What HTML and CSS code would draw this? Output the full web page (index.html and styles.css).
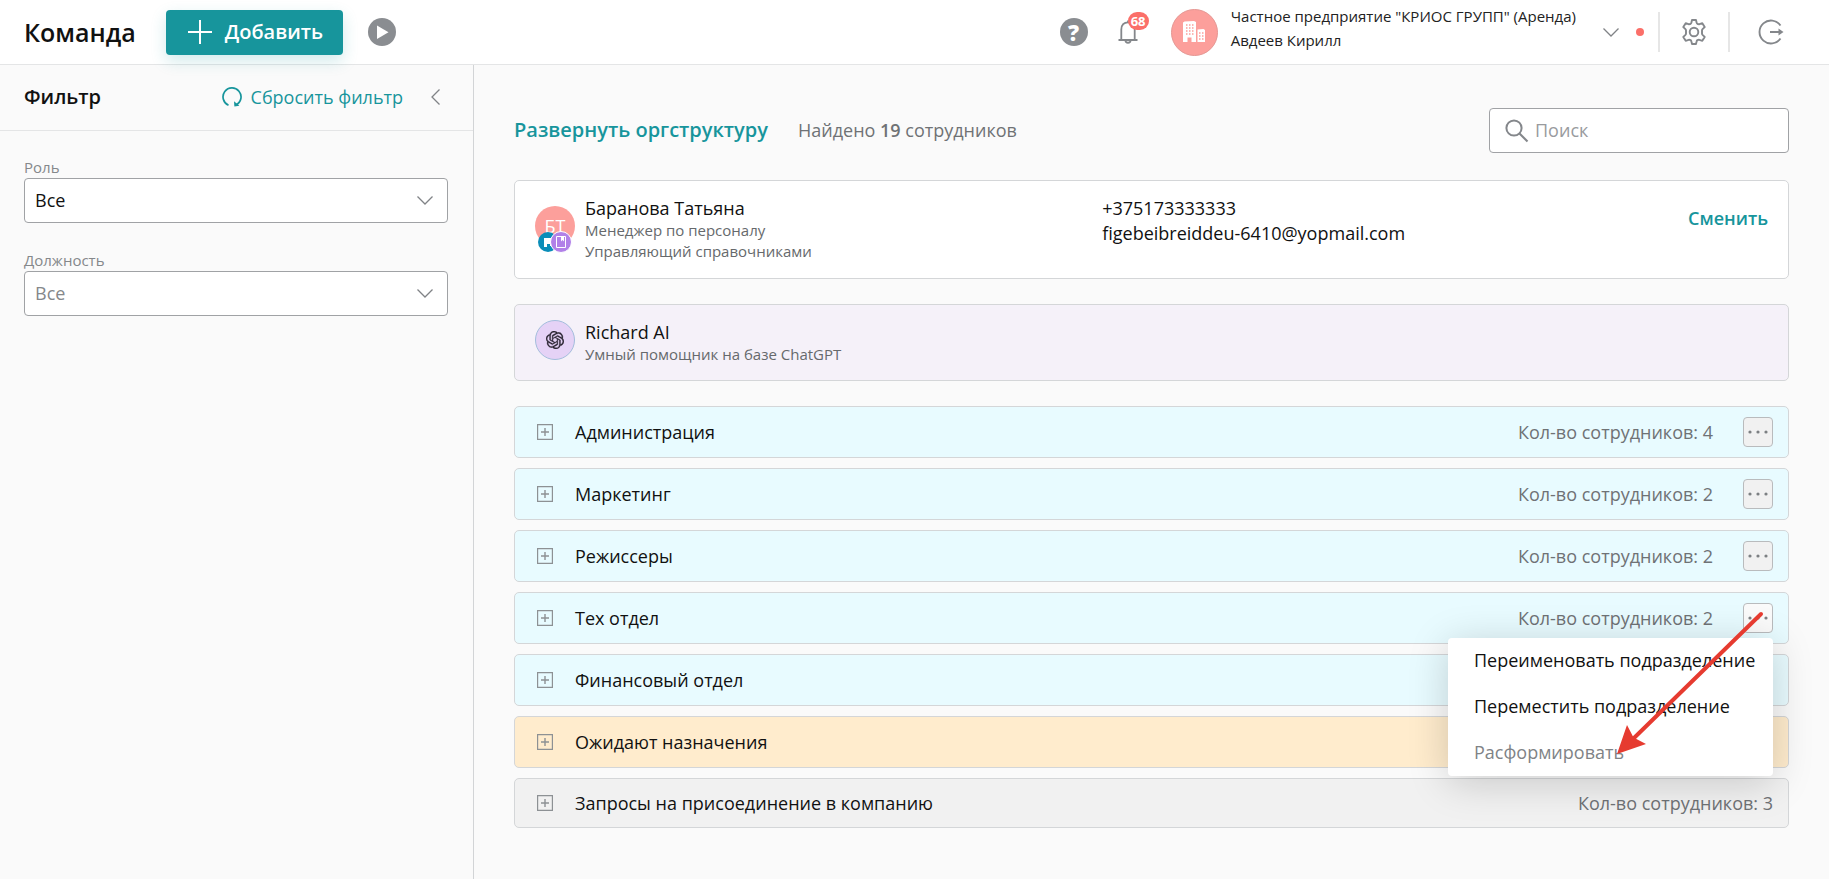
FILE: index.html
```html
<!DOCTYPE html>
<html lang="ru">
<head>
<meta charset="utf-8">
<title>Команда</title>
<link rel="stylesheet" href="styles.css">
</head>
<body>
<svg class="sprite" aria-hidden="true">
  <symbol id="chevron" viewBox="0 0 16 9"><path d="M.5 .5 8 8 15.500 .5" fill="none" stroke="currentColor" stroke-width="1.300"/></symbol>
  <symbol id="plus-box" viewBox="0 0 16 16"><path d="M.5 .5h15v15H.5zM8 4v8M4 8h8" fill="none" stroke="currentColor" stroke-width="1.400"/></symbol>
  <symbol id="dots" viewBox="0 0 20 4"><g fill="#7c7f82"><circle cx="2" cy="2" r="1.600"/><circle cx="10" cy="2" r="1.600"/><circle cx="18" cy="2" r="1.600"/></g></symbol>
</svg>

<header class="header">
  <h1 class="title">Команда</h1>
  <button class="add" type="button">
    <svg width="24" height="24" viewBox="0 0 24 24"><path d="M12 0v24M0 12h24" stroke="#fff" stroke-width="2"/></svg>
    <span>Добавить</span>
  </button>
  <button class="icon-button" type="button" aria-label="Видео">
    <svg width="28" height="28" viewBox="0 0 28 28"><circle cx="14" cy="14" r="14" fill="#8a8d91"/><path d="M9 7.500v13.500l11.500-6.700z" fill="#fff"/></svg>
  </button>

  <div class="header-right">
    <button class="icon-button help" type="button" aria-label="Помощь">?</button>
    <button class="icon-button bell" type="button" aria-label="Уведомления">
      <svg width="20" height="24" viewBox="0 0 20 24"><path d="M.5 20h19M3.300 20V9.500C3.300 5 6 2.300 10 2.300s6.700 2.700 6.700 7.200V20M10 2.300V.5M7.500 20.500c0 3 5 3 5 0" fill="none" stroke="#84878b" stroke-width="1.800"/></svg>
      <span class="badge">68</span>
    </button>
    <button class="account" type="button">
      <span class="company-logo">
        <svg width="24" height="24" viewBox="0 0 24 24"><path d="M1 2.500 2.500 1.500 12 1l2 1v20H9.500v-4.500h-4V22H1zM15.500 9.500l6-.5 1.500 1v12h-7.500z" fill="#fff"/><path d="M4 5h1.500M7 5h1.500M10 5h1.500M4 8h1.500M7 8h1.500M10 8h1.500M4 11h1.500M7 11h1.500M10 11h1.500M4 14h1.500M7 14h1.500M10 14h1.500M17 13h1.500M20 13h1.500M17 16h1.500M20 16h1.500M17 19h1.500M20 19h1.500" stroke="#fc9f9b" stroke-width="1.400"/></svg>
      </span>
      <span class="account-text">
        <span>Частное предприятие "КРИОС ГРУПП" (Аренда)</span>
        <span>Авдеев Кирилл</span>
      </span>
      <svg class="account-chevron" width="16" height="9"><use href="#chevron"/></svg>
    </button>
    <span class="dot"></span>
    <span class="divider"></span>
    <button class="icon-button gear" type="button" aria-label="Настройки">
      <svg width="24" height="26" viewBox="0 0 24 26"><path d="M10 1h4l.6 2.600q.2 1 1.200 1.400.8.500 1.700.1L20.300 4.200l2.400 3.900-1.900 1.800q-.8.800-.8 1.600v3q0 .8.800 1.600l1.900 1.800-2.400 3.900-2.800-.9q-.9-.4-1.700.1-1 .4-1.200 1.400L14 25h-4l-.6-2.600q-.2-1-1.200-1.400-.8-.5-1.700-.1L3.700 21.800 1.300 17.900l1.900-1.800q.8-.8.800-1.600v-3q0-.8-.8-1.600L1.300 8.100l2.400-3.900 2.800.9q.9.400 1.700-.1 1-.4 1.200-1.400z" fill="none" stroke="#84878b" stroke-width="1.900" stroke-linejoin="round"/><circle cx="12" cy="13" r="4.300" fill="none" stroke="#84878b" stroke-width="1.900"/></svg>
    </button>
    <span class="divider"></span>
    <button class="icon-button logout" type="button" aria-label="Выйти">
      <svg width="26" height="26" viewBox="0 0 26 26"><path d="M22.500 6.500a11.500 11.500 0 1 0 0 13M12 13h10" fill="none" stroke="#84878b" stroke-width="1.900"/><path d="M20.500 9.500 25.500 13l-5 3.500z" fill="#84878b"/></svg>
    </button>
  </div>
</header>

<div class="layout">
  <aside class="sidebar">
    <div class="filter-head">
      <h2 class="filter-title">Фильтр</h2>
      <button class="reset" type="button">
        <svg width="20" height="20" viewBox="0 0 20 20"><path d="M6.500 18.200A9 9 0 1 1 14 18" fill="none" stroke="#17959c" stroke-width="1.700"/><path d="M12 14.200l.4 5.300 5-.8z" fill="#17959c"/></svg>
        <span>Сбросить фильтр</span>
      </button>
      <button class="icon-button collapse" type="button" aria-label="Свернуть">
        <svg width="9" height="16" viewBox="0 0 9 16"><path d="M8.500 .5 1 8l7.500 7.500" fill="none" stroke="#808386" stroke-width="1.300"/></svg>
      </button>
    </div>
    <div class="fields">
      <div class="field">
        <label for="role">Роль</label>
        <div class="select-box">
          <select id="role"><option>Все</option></select>
          <svg width="16" height="9"><use href="#chevron"/></svg>
        </div>
      </div>
      <div class="field">
        <label for="position">Должность</label>
        <div class="select-box">
          <select id="position" class="muted"><option>Все</option></select>
          <svg width="16" height="9"><use href="#chevron"/></svg>
        </div>
      </div>
    </div>
  </aside>

  <main class="main">
    <div class="toolbar">
      <button class="link expand" type="button">Развернуть оргструктуру</button>
      <span class="found">Найдено <b>19</b> сотрудников</span>
      <label class="search">
        <svg width="24" height="24" viewBox="0 0 24 24"><circle cx="9" cy="9" r="7.600" fill="none" stroke="#84878b" stroke-width="2"/><path d="M14.500 14.500 22.500 22.500" stroke="#84878b" stroke-width="2.200"/></svg>
        <input type="search" placeholder="Поиск" aria-label="Поиск">
      </label>
    </div>

    <section class="card person">
      <div class="who">
        <div class="avatar">БТ
          <span class="role-icons">
            <svg width="20" height="20" viewBox="0 0 20 20"><circle cx="10" cy="10" r="10" fill="#0a8db8"/><path d="M6 6h8v8h-2v-2H9v3H6z" fill="#fff"/></svg>
            <svg width="22" height="22" viewBox="0 0 22 22"><circle cx="11" cy="11" r="10.500" fill="#b180e8" stroke="#fff"/><path d="M6.500 5.500h9v11h-9z" fill="none" stroke="#fff"/><path d="M11 5.500h3v5l-1.500-1.500L11 10.500z" fill="#fff"/></svg>
          </span>
        </div>
        <div class="lines">
          <span class="name">Баранова Татьяна</span>
          <span class="note">Менеджер по персоналу</span>
          <span class="note">Управляющий справочниками</span>
        </div>
      </div>
      <div class="contacts">
        <span>+375173333333</span>
        <span>figebeibreiddeu-6410@yopmail.com</span>
      </div>
      <button class="link change" type="button">Сменить</button>
    </section>

    <section class="card assistant">
      <div class="who">
        <div class="avatar ai">
          <svg width="18" height="18" viewBox="0 0 24 24"><path fill="#2b2533" stroke="#2b2533" stroke-width=".4" d="M22.2819 9.8211a5.9847 5.9847 0 0 0-.5157-4.9108 6.0462 6.0462 0 0 0-6.5098-2.9A6.0651 6.0651 0 0 0 4.9807 4.1818a5.9847 5.9847 0 0 0-3.9977 2.9 6.0462 6.0462 0 0 0 .7427 7.0966 5.98 5.98 0 0 0 .511 4.9107 6.051 6.051 0 0 0 6.5146 2.9001A5.9847 5.9847 0 0 0 13.2599 24a6.0557 6.0557 0 0 0 5.7718-4.2058 5.9894 5.9894 0 0 0 3.9977-2.9001 6.0557 6.0557 0 0 0-.7475-7.0729zm-9.022 12.6081a4.4755 4.4755 0 0 1-2.8764-1.0408l.1419-.0804 4.7783-2.7582a.7948.7948 0 0 0 .3927-.6813v-6.7369l2.02 1.1686a.071.071 0 0 1 .038.0615v5.5826a4.504 4.504 0 0 1-4.4945 4.4944zm-9.6607-4.1254a4.4708 4.4708 0 0 1-.5346-3.0137l.142.0852 4.783 2.7582a.7712.7712 0 0 0 .7806 0l5.8428-3.3685v2.3324a.0804.0804 0 0 1-.0332.0615L9.74 19.9502a4.4992 4.4992 0 0 1-6.1408-1.6464zM2.3408 7.8956a4.485 4.485 0 0 1 2.3655-1.9728V11.6a.7664.7664 0 0 0 .3879.6765l5.8144 3.3543-2.0201 1.1685a.0757.0757 0 0 1-.071 0l-4.8303-2.7865A4.504 4.504 0 0 1 2.3408 7.872zm16.5963 3.8558L13.1038 8.364 15.1192 7.2a.0757.0757 0 0 1 .071 0l4.8303 2.7913a4.4944 4.4944 0 0 1-.6765 8.1042v-5.6772a.79.79 0 0 0-.407-.667zm2.0107-3.0231l-.142-.0852-4.7735-2.7818a.7759.7759 0 0 0-.7854 0L9.409 9.2297V6.8974a.0662.0662 0 0 1 .0284-.0615l4.8303-2.7866a4.4992 4.4992 0 0 1 6.6802 4.66zM8.3065 12.863l-2.02-1.1638a.0804.0804 0 0 1-.038-.0567V6.0742a4.4992 4.4992 0 0 1 7.3757-3.4537l-.142.0805L8.704 5.459a.7948.7948 0 0 0-.3927.6813zm1.0976-2.3654l2.602-1.4998 2.6069 1.4998v2.9994l-2.5974 1.4997-2.6067-1.4997Z"/></svg>
        </div>
        <div class="lines">
          <span class="name">Richard AI</span>
          <span class="note">Умный помощник на базе ChatGPT</span>
        </div>
      </div>
    </section>

    <div class="departments">
      <div class="row">
        <button class="toggle" type="button"><svg width="16" height="16"><use href="#plus-box"/></svg>Администрация</button>
        <span class="count">Кол-во сотрудников: 4</span>
        <div class="actions"><button class="more" type="button" aria-label="Действия"><svg width="20" height="4"><use href="#dots"/></svg></button></div>
      </div>
      <div class="row">
        <button class="toggle" type="button"><svg width="16" height="16"><use href="#plus-box"/></svg>Маркетинг</button>
        <span class="count">Кол-во сотрудников: 2</span>
        <div class="actions"><button class="more" type="button" aria-label="Действия"><svg width="20" height="4"><use href="#dots"/></svg></button></div>
      </div>
      <div class="row">
        <button class="toggle" type="button"><svg width="16" height="16"><use href="#plus-box"/></svg>Режиссеры</button>
        <span class="count">Кол-во сотрудников: 2</span>
        <div class="actions"><button class="more" type="button" aria-label="Действия"><svg width="20" height="4"><use href="#dots"/></svg></button></div>
      </div>
      <div class="row">
        <button class="toggle" type="button"><svg width="16" height="16"><use href="#plus-box"/></svg>Тех отдел</button>
        <span class="count">Кол-во сотрудников: 2</span>
        <div class="actions">
          <button class="more open" type="button" aria-label="Действия"><svg width="20" height="4"><use href="#dots"/></svg></button>
          <div class="menu">
            <button type="button">Переименовать подразделение</button>
            <button type="button">Переместить подразделение</button>
            <button class="disabled" type="button">Расформировать</button>
          </div>
          <svg class="arrow" width="150" height="146" viewBox="0 0 150 146"><path d="M145 5 18 129" stroke="#e63b30" stroke-width="4" stroke-linecap="round"/><path d="M1 145 11 116l6.500 12.500L30 135z" fill="#e63b30"/></svg>
        </div>
      </div>
      <div class="row">
        <button class="toggle" type="button"><svg width="16" height="16"><use href="#plus-box"/></svg>Финансовый отдел</button>
      </div>
      <div class="row waiting">
        <button class="toggle" type="button"><svg width="16" height="16"><use href="#plus-box"/></svg>Ожидают назначения</button>
      </div>
      <div class="row requests">
        <button class="toggle" type="button"><svg width="16" height="16"><use href="#plus-box"/></svg>Запросы на присоединение в компанию</button>
        <span class="count">Кол-во сотрудников: 3</span>
      </div>
    </div>
  </main>
</div>
</body>
</html>
```
FILE: styles.css
```css
* { box-sizing: border-box; }

body {
  margin: 0;
  min-height: 100vh;
  display: flex;
  flex-direction: column;
  font: 18px/24px "Open Sans", sans-serif;
  color: #111;
  background: #fafafa;
}

button, input, select { font: inherit; color: inherit; }

button {
  padding: 0;
  border: 0;
  background: none;
  text-align: left;
  cursor: pointer;
}

svg { display: block; flex: none; }

.sprite { position: absolute; width: 0; height: 0; }

.header {
  display: flex;
  align-items: center;
  height: 65px;
  padding: 0 45px 0 24px;
  background: #fff;
  border-bottom: 1px solid #e4e5e6;
}

.title { margin: 0; font-size: 25px; font-weight: 600; }

.add {
  display: flex;
  align-items: center;
  gap: 13px;
  height: 45px;
  margin: 0 25px 0 30px;
  padding: 0 20px 0 22px;
  border-radius: 4px;
  background: #17959c;
  box-shadow: 0 6px 16px rgba(23, 149, 156, .2);
  color: #fff;
  font-size: 20px;
  font-weight: 600;
}

.icon-button { display: block; }

.header-right {
  display: flex;
  align-items: center;
  margin-left: auto;
}

.help {
  width: 28px;
  height: 28px;
  border-radius: 50%;
  background: #8a8d91;
  color: #fff;
  font-size: 22px;
  font-weight: 800;
  text-align: center;
}

.bell { position: relative; margin: 0 33px 0 30px; }

.badge {
  position: absolute;
  left: 10px;
  top: -8px;
  padding: 0 3px;
  border-radius: 9px;
  background: #fb6f69;
  color: #fff;
  font-size: 13px;
  line-height: 18px;
  font-weight: 700;
}

.account { display: flex; align-items: center; }

.company-logo {
  display: flex;
  align-items: center;
  justify-content: center;
  width: 47px;
  height: 47px;
  margin-right: 13px;
  border: 1px solid #e59692;
  border-radius: 50%;
  background: #fc9f9b;
}

.account-text {
  display: flex;
  flex-direction: column;
  padding-bottom: 8px;
  color: #222;
  font-size: 15px;
}

.account-chevron { margin: 0 17px 0 27px; color: #808386; }

.dot { width: 8px; height: 8px; border-radius: 50%; background: #fb6f69; }

.divider { width: 2px; height: 40px; background: #e6e6e6; }

.dot + .divider { margin-left: 14px; }

.gear { margin: 0 22px; }

.logout { margin-left: 28px; }

.layout { display: flex; flex: 1; }

.sidebar {
  width: 474px;
  flex: none;
  border-right: 1px solid #d2d4d6;
}

.filter-head {
  display: flex;
  align-items: center;
  height: 66px;
  padding: 0 33px 2px 24px;
  border-bottom: 1px solid #e4e5e6;
}

.filter-title { margin: 0; font-size: 20px; font-weight: 600; }

.reset {
  display: flex;
  align-items: center;
  gap: 9px;
  margin-left: auto;
  color: #17959c;
}

.collapse { margin-left: 28px; }

.fields {
  display: flex;
  flex-direction: column;
  gap: 28px;
  padding: 27px 25px 0 24px;
}

.field label {
  display: block;
  padding-bottom: 2px;
  color: #85888b;
  font-size: 15px;
  line-height: 18px;
}

.select-box { position: relative; }

.select-box select {
  display: block;
  width: 100%;
  height: 45px;
  padding: 0 40px 2px 10px;
  border: 1px solid #a0a2a5;
  border-radius: 4px;
  background: #fff;
  appearance: none;
}

.select-box .muted { color: #85888b; }

.select-box svg {
  position: absolute;
  right: 15px;
  top: 18px;
  color: #808386;
  pointer-events: none;
}

.main { flex: 1; min-width: 0; padding: 43px 40px; }

.toolbar { display: flex; align-items: center; margin-bottom: 27px; }

.link { color: #17959c; font-weight: 600; }

.expand { padding-bottom: 2px; font-size: 20px; }

.found { padding-bottom: 2px; margin-left: 30px; color: #6f7275; }

.found b { font-weight: 600; }

.search {
  display: flex;
  align-items: center;
  gap: 6px;
  width: 300px;
  height: 45px;
  margin-left: auto;
  padding: 0 15px;
  border: 1px solid #a0a2a5;
  border-radius: 4px;
  background: #fff;
}

.search input {
  flex: 1;
  min-width: 0;
  padding: 0 0 2px;
  border: 0;
  outline: 0;
  background: none;
}

.search input::placeholder { color: #999b9e; }

.card {
  display: grid;
  grid-template-columns: 46% 1fr auto;
  margin-bottom: 25px;
  padding: 15px 20px 16px;
  border: 1px solid #d4d6d8;
  border-radius: 5px;
  background: #fff;
}

.assistant { padding-bottom: 15px; background: #f5f1f9; }

.assistant .who { padding-bottom: 0; min-height: 45px; }

.who { display: flex; gap: 10px; }

.avatar {
  position: relative;
  display: flex;
  align-items: center;
  justify-content: center;
  width: 40px;
  height: 40px;
  margin-top: 10px;
  border-radius: 50%;
  background: #fc9f9b;
  color: #fff;
}

.ai { margin-top: 0; border: 1px solid #a3bddc; background: #e5d2f6; }

.role-icons {
  position: absolute;
  left: 3px;
  top: 25px;
  display: flex;
  align-items: center;
}

.role-icons svg + svg { margin-left: -8px; }

.lines { display: flex; flex-direction: column; }

.note { color: #66696c; font-size: 15px; line-height: 21px; }

.contacts { display: flex; flex-direction: column; line-height: 25px; }

.change { align-self: start; margin-top: 10px; }

.departments { display: flex; flex-direction: column; gap: 10px; }

.row {
  display: flex;
  align-items: center;
  height: 52px;
  padding: 0 15px 0 22px;
  border: 1px solid #d4d6d8;
  border-radius: 5px;
  background: #e8fbff;
}

.waiting { background: #ffeccd; }

.requests { height: 50px; background: #f1f1f1; }

.toggle { display: flex; align-items: center; gap: 22px; }

.toggle svg { color: #8d9194; }

.count { margin-left: auto; color: #6f7275; }

.actions { position: relative; margin-left: 30px; }

.more {
  display: flex;
  align-items: center;
  justify-content: center;
  width: 30px;
  height: 30px;
  border: 1px solid #b9bbbd;
  border-radius: 4px;
  background: #f1f1f1;
}

.open { background: #fafafa; }

.menu {
  position: absolute;
  z-index: 1;
  top: 35px;
  right: 0;
  display: flex;
  flex-direction: column;
  width: 325px;
  border-radius: 4px;
  background: #fff;
  box-shadow: 0 6px 40px rgba(0, 0, 0, .18);
}

.menu button { padding: 10px 26px 12px; white-space: nowrap; }

.menu .disabled { color: #808386; }

.arrow {
  position: absolute;
  z-index: 2;
  right: 7px;
  top: 6px;
  pointer-events: none;
}
```
